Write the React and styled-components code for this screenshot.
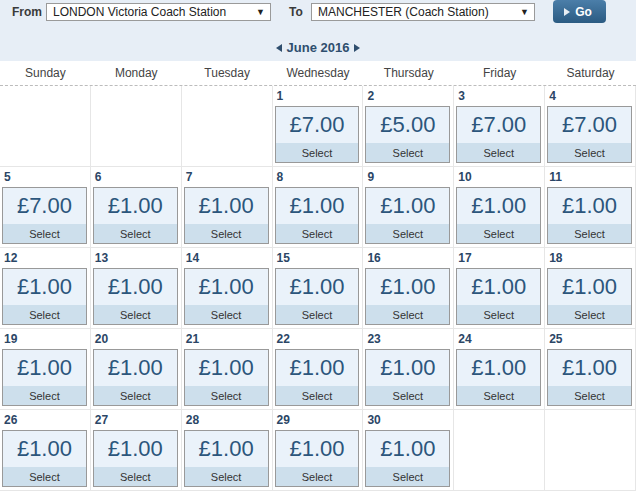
import React from "react";
import styled, { createGlobalStyle } from "styled-components";

const Global = createGlobalStyle`
  html, body { margin: 0; padding: 0; background: #fff; }
  body { font-family: "Liberation Sans", Arial, sans-serif; }
`;

const Page = styled.div`
  width: 636px;
`;

const Header = styled.div`
  background: #e7eef6;
  height: 61px;
  display: flex;
  flex-direction: column;
`;

const FormRow = styled.div`
  display: flex;
  align-items: flex-start;
  height: 23px;
`;

const Label = styled.span`
  font-size: 12px;
  font-weight: bold;
  color: #3a3a3a;
  margin: 5px 0 0 ${(p) => p.$ml}px;
  width: ${(p) => p.$w}px;
`;

const FakeSelect = styled.div`
  margin-top: 3px;
  box-sizing: border-box;
  width: ${(p) => p.$w}px;
  height: 18px;
  background: #fff;
  border: 1px solid #9a9a9a;
  font-size: 12px;
  color: #222;
  display: flex;
  align-items: center;
  justify-content: space-between;
  padding: 0 5px 0 6px;
`;

const Caret = styled.span`
  font-size: 9px;
  color: #222;
`;

const GoButton = styled.div`
  margin-left: 18px;
  width: 53px;
  height: 23px;
  box-sizing: border-box;
  border-radius: 4px;
  background: linear-gradient(#4b7ea9, #2b5b82);
  color: #fff;
  font-weight: bold;
  font-size: 12px;
  display: flex;
  align-items: center;
  justify-content: center;
  gap: 5px;
  padding-right: 3px;
`;

const MonthNav = styled.div`
  margin-top: 17px;
  display: flex;
  align-items: center;
  justify-content: center;
  gap: 5px;
  font-size: 13px;
  font-weight: bold;
  color: #2f4e6e;
`;

const DayNames = styled.div`
  display: grid;
  grid-template-columns: repeat(7, 1fr);
  height: 24px;
  border-bottom: 1px dashed #bcbcbc;
`;

const DayName = styled.div`
  font-size: 12px;
  color: #444;
  display: flex;
  align-items: center;
  justify-content: center;
`;

const Grid = styled.div`
  display: grid;
  grid-template-columns: repeat(7, 1fr);
`;

const Cell = styled.div`
  height: 78px;
  border-right: 1px solid #e6e6e6;
  border-bottom: 1px solid #e6e6e6;
  padding: 2px 3px 0 3px;
  box-sizing: content-box;
  min-width: 0;
`;

const DayNum = styled.div`
  font-size: 12px;
  font-weight: bold;
  color: #2b4666;
  line-height: 16px;
  padding-left: 1px;
`;

const PriceBox = styled.div`
  margin-top: 2px;
  margin-left: -1px;
  border: 1px solid #999;
  display: flex;
  flex-direction: column;
`;

const Price = styled.div`
  height: 36px;
  background: #eaf2fa;
  color: #2c567c;
  font-size: 22px;
  display: flex;
  align-items: center;
  justify-content: center;
`;

const SelectBar = styled.div`
  height: 19px;
  background: #cddfec;
  color: #333;
  font-size: 11px;
  display: flex;
  align-items: center;
  justify-content: center;
`;

const Tri = ({ dir }) => (
  <svg width="6" height="8" viewBox="0 0 6 8">
    {dir === "left" ? (
      <polygon points="6,0 6,8 0,4" fill="#2f4e6e" />
    ) : (
      <polygon points="0,0 0,8 6,4" fill="#2f4e6e" />
    )}
  </svg>
);

const prices = {
  1: "£7.00",
  2: "£5.00",
  3: "£7.00",
  4: "£7.00",
  5: "£7.00",
};

const days = ["Sunday", "Monday", "Tuesday", "Wednesday", "Thursday", "Friday", "Saturday"];

export default function App() {
  const cells = [];
  for (let i = 0; i < 3; i++) cells.push(null);
  for (let d = 1; d <= 30; d++) cells.push(d);
  while (cells.length % 7) cells.push(null);

  return (
    <Page>
      <Global />
      <Header>
        <FormRow>
          <Label $ml={12} $w={34}>From</Label>
          <FakeSelect $w={225}>
            <span>LONDON Victoria Coach Station</span>
            <Caret>▼</Caret>
          </FakeSelect>
          <Label $ml={18} $w={22}>To</Label>
          <FakeSelect $w={224}>
            <span>MANCHESTER (Coach Station)</span>
            <Caret>▼</Caret>
          </FakeSelect>
          <GoButton>
            <svg width="6" height="8" viewBox="0 0 6 8">
              <polygon points="0,0 0,8 6,4" fill="#e8eef4" />
            </svg>
            <span>Go</span>
          </GoButton>
        </FormRow>
        <MonthNav>
          <Tri dir="left" />
          <span>June 2016</span>
          <Tri dir="right" />
        </MonthNav>
      </Header>
      <DayNames>
        {days.map((d) => (
          <DayName key={d}>{d}</DayName>
        ))}
      </DayNames>
      <Grid>
        {cells.map((d, i) => (
          <Cell key={i}>
            {d && (
              <>
                <DayNum>{d}</DayNum>
                <PriceBox>
                  <Price>{prices[d] || "£1.00"}</Price>
                  <SelectBar>Select</SelectBar>
                </PriceBox>
              </>
            )}
          </Cell>
        ))}
      </Grid>
    </Page>
  );
}
